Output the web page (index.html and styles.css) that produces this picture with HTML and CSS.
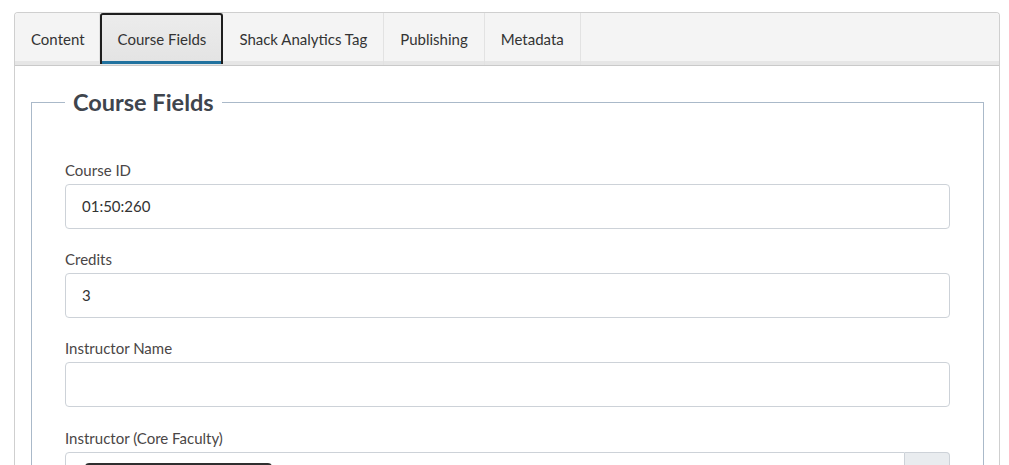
FILE: index.html
```html
<!DOCTYPE html>
<html>
<head>
<meta charset="utf-8">
<link rel="stylesheet" href="styles.css">
</head>
<body>
<div class="page">
  <div class="card">
    <div class="tabs">
      <div class="tab">Content</div>
      <div class="tab active">Course Fields</div>
      <div class="tab">Shack Analytics Tag</div>
      <div class="tab">Publishing</div>
      <div class="tab">Metadata</div>
    </div>
    <div class="panel">
      <fieldset class="group">
        <legend class="legend">Course Fields</legend>
        <div class="field">
          <label class="label">Course ID</label>
          <div class="input">01:50:260</div>
        </div>
        <div class="field">
          <label class="label">Credits</label>
          <div class="input">3</div>
        </div>
        <div class="field">
          <label class="label">Instructor Name</label>
          <div class="input"></div>
        </div>
        <div class="field last">
          <label class="label">Instructor (Core Faculty)</label>
          <div class="input-group">
            <div class="input select"><span class="chip"></span></div>
            <div class="addon"></div>
          </div>
        </div>
      </fieldset>
    </div>
  </div>
</div>
</body>
</html>
```

FILE: styles.css
```css
html, body {
  margin: 0;
  padding: 0;
  background: #ffffff;
  overflow: hidden;
  height: 465px;
}
body {
  font-family: "Lato", "Liberation Sans", sans-serif;
  color: #333;
}
.page {
  padding: 12px 9px 0 14px;
}
.card {
  border: 1px solid #cfcfcf;
  border-radius: 4px 4px 0 0;
  border-bottom: none;
}
.tabs {
  display: flex;
  background: #f4f4f4;
  border-bottom: 1px solid #c9c9c9;
  box-shadow: inset 0 -4px 0 #e6e6e6;
  height: 52px;
  border-radius: 3px 3px 0 0;
}
.tab {
  padding: 0 16px;
  font-size: 15px;
  line-height: 52px;
  color: #333;
  border-right: 1px solid #e2e2e2;
  box-sizing: border-box;
}
.tab:first-child {
  padding: 0 14px 0 16px;
}
.tab.active {
  border: 2px solid #1e1e1e;
  border-bottom: none;
  border-radius: 3px 3px 0 0;
  background: linear-gradient(#ececec, #e3e3e3);
  line-height: 48px;
  height: 51px;
  padding: 0 15px 0 16px;
  box-shadow: inset 0 -3px 0 #21729f;
}
.panel {
  padding: 21px 15px 0 16px;
}
.group {
  margin: 0;
  border: 1px solid #aab9c9;
  padding: 42px 33px 0 33px;
}
.legend {
  padding: 0 8px;
  font-size: 23.5px;
  font-weight: 700;
  color: #3f454d;
  line-height: 30px;
}
.field {
  margin-bottom: 19px;
}
.field.last {
  padding-top: 1px;
}
.label {
  display: block;
  font-size: 15px;
  line-height: 22px;
  color: #4a4646;
  margin-bottom: 3px;
}
.input {
  box-sizing: border-box;
  height: 45px;
  border: 1px solid #cdd2d8;
  border-radius: 4px;
  padding: 0 16px;
  font-size: 15px;
  line-height: 43px;
  color: #333;
  background: #fff;
}
.input-group {
  display: flex;
}
.input-group .select {
  flex: 1;
  border-radius: 4px 0 0 4px;
  padding: 10px 19px;
}
.chip {
  display: block;
  width: 187px;
  height: 26px;
  background: #2f2f2f;
  border-radius: 4px;
}
.addon {
  width: 45px;
  height: 45px;
  box-sizing: border-box;
  background: #e9ecef;
  border: 1px solid #cdd2d8;
  border-left: none;
  border-radius: 0 4px 4px 0;
}
```
